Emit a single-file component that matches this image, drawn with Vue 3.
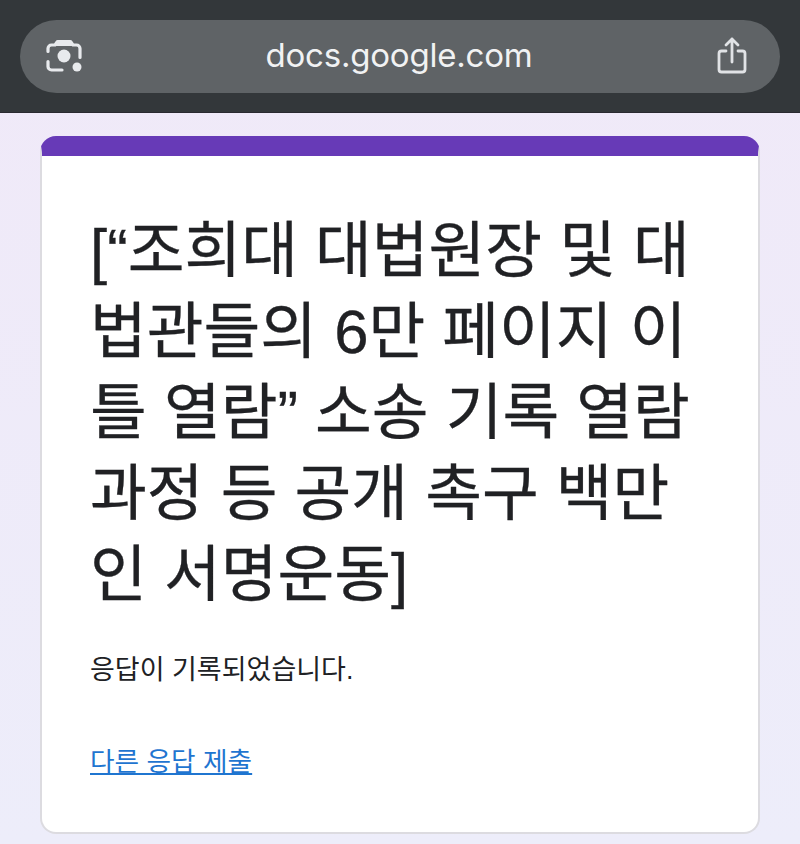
<template>
  <div class="page">
    <header class="bar">
      <div class="pill">
        <svg class="icon" width="40" height="40" viewBox="0 0 40 40" fill="none">
          <path d="M3 14.500V11.500A3.500 3.500 0 0 1 6.500 8H10L12.500 4.500H25.500L28 8H31.500A3.500 3.500 0 0 1 35 11.500V20.500" stroke="#e8eaed" stroke-width="3.200" stroke-linecap="round" stroke-linejoin="round"/>
          <path d="M13 5H25L27.500 9H10.500Z" fill="#e8eaed"/>
          <path d="M3 24.500V29.500A3.500 3.500 0 0 0 6.500 33H17" stroke="#e8eaed" stroke-width="3.200" stroke-linecap="round"/>
          <circle cx="19" cy="19" r="6.500" fill="#e8eaed"/>
          <circle cx="32" cy="30" r="4.500" fill="#e8eaed"/>
        </svg>
        <span class="url">docs.google.com</span>
        <svg class="icon" width="40" height="42" viewBox="0 0 40 42" fill="none" stroke="#e1e3e6" stroke-width="2.800" stroke-linecap="round" stroke-linejoin="round">
          <path d="M13 15H8.500A2.500 2.500 0 0 0 6 17.500V33.500A2.500 2.500 0 0 0 8.500 36H29.500A2.500 2.500 0 0 0 32 33.500V17.500A2.500 2.500 0 0 0 29.500 15H25"/>
          <path d="M19 26V3M13 9L19 3L25 9"/>
        </svg>
      </div>
    </header>
    <main class="content">
      <section class="card">
        <h1 class="title">[“조희대 대법원장 및 대법관들의 6만 페이지 이틀 열람” 소송 기록 열람 과정 등 공개 촉구 백만인 서명운동]</h1>
        <p class="note">응답이 기록되었습니다.</p>
        <a class="link" href="#">다른 응답 제출</a>
      </section>
    </main>
  </div>
</template>

<script setup>
</script>

<style>
html, body { margin: 0; background: #f0ebf8; }
</style>

<style scoped>
.page {
  width: 800px;
  height: 844px;
  overflow: hidden;
  background: linear-gradient(#f0e9f8, #ededfa);
  font-family: "Liberation Sans", "Noto Sans CJK KR", sans-serif;
}
.bar {
  height: 113px;
  box-sizing: border-box;
  padding: 20px 20px 0;
  background: #33373a;
  border-bottom: 1px solid #2a2a30;
}
.pill {
  height: 73px;
  border-radius: 37px;
  background: #5f6366;
  display: flex;
  align-items: center;
  justify-content: space-between;
  padding: 0 27px 0 25px;
}
.icon { flex: none; }
.url {
  color: #f1f2f3;
  font-size: 33px;
  font-family: "Inter", "Liberation Sans", sans-serif;
  letter-spacing: -0.2px;
  position: relative;
  top: -2px;
}
.content { padding: 23px 40px 0; }
.card {
  height: 698px;
  box-sizing: border-box;
  background: #fff;
  border: 2px solid #dcdbe0;
  border-top: 20px solid #673ab7;
  border-radius: 16px;
  padding: 54px 48px 0 49px;
}
.title {
  margin: 0 0 0 -1px;
  font-size: 61.700px;
  font-weight: 400;
  line-height: 81px;
  color: #202124;
  word-break: break-all;
  -webkit-text-stroke: 0.3px #202124;
}
.note {
  margin: 34px 0 0 -1px;
  font-size: 27px;
  line-height: 42px;
  color: #202124;
}
.link {
  display: inline-block;
  margin: 50px 0 0 -1px;
  font-size: 26.700px;
  line-height: 42px;
  color: #1f75d0;
  text-decoration: underline;
}
</style>
